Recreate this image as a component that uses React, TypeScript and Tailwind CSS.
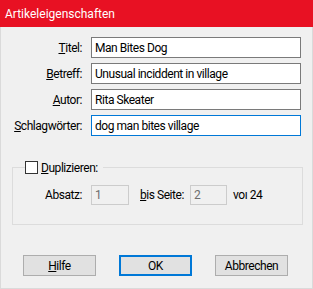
import React from "react";

export default function App() {
    const fields = [
        { key: "T", rest: "itel:", value: "Man Bites Dog" },
        { key: "B", rest: "etreff:", value: "Unusual inciddent in village" },
        { key: "A", rest: "utor:", value: "Rita Skeater" },
        { key: "S", rest: "chlagwörter:", value: "dog man bites village", focused: true },
    ];

    return (
        <div className="w-[313px] h-[289px] flex flex-col font-['Roboto',sans-serif] text-[12px] tracking-[-0.45px] text-black">
            {/* Title bar */}
            <div className="h-[27px] shrink-0 bg-[#e81123] text-white tracking-normal pl-[5px] flex items-center">
                Artikeleigenschaften
            </div>

            {/* Dialog body */}
            <div className="flex-1 bg-[#f0f0f0] border-x border-b border-[#dadada] flex flex-col">
                {/* Field rows */}
                <div className="grid grid-cols-[81px_210px] gap-x-[9px] gap-y-[5px] pt-[10px]">
                    {fields.map((f) => (
                        <React.Fragment key={f.key}>
                            <label className="text-right self-center whitespace-nowrap">
                                <span className="underline">{f.key}</span>
                                {f.rest}
                            </label>
                            <input
                                readOnly
                                value={f.value}
                                className={
                                    f.focused
                                        ? "h-[21px] border border-[#0078d7] bg-white px-[3px] outline-none"
                                        : "h-[21px] border border-[#7a7a7a] bg-white px-[3px] outline-none"
                                }
                            />
                        </React.Fragment>
                    ))}
                </div>

                {/* Duplicate group */}
                <fieldset className="mt-[24px] ml-[11px] mr-[9px] border border-[#dcdcdc] pt-[10px] pb-[19px]">
                    <legend className="ml-[12px] pr-[5px] flex items-center gap-[3px] h-[15px]">
                        <span className="w-[13px] h-[13px] border border-[#333333] bg-white" />
                        <span>
                            <span className="underline">D</span>uplizieren:
                        </span>
                    </legend>
                    <div className="flex items-center">
                        <span className="w-[69px] text-right">Absatz:</span>
                        <input
                            readOnly
                            disabled
                            value="1"
                            className="ml-[9px] w-[38px] h-[20px] border border-[#cccccc] bg-[#f0f0f0] text-[#6d6d6d] px-[3px]"
                        />
                        <span className="ml-[11px] w-[42px] whitespace-nowrap">
                            <span className="underline">b</span>is Seite:
                        </span>
                        <input
                            readOnly
                            disabled
                            value="2"
                            className="ml-[8px] w-[37px] h-[20px] border border-[#cccccc] bg-[#f0f0f0] text-[#6d6d6d] px-[3px]"
                        />
                        <span className="ml-[6px] whitespace-nowrap">voı 24</span>
                    </div>
                </fieldset>

                {/* Buttons */}
                <div className="mt-[30px] ml-[22px] flex gap-[23px]">
                    <button className="w-[73px] h-[21px] border border-[#adadad] bg-[#e1e1e1]">
                        <span className="underline">H</span>ilfe
                    </button>
                    <button className="w-[73px] h-[21px] border-2 border-[#0078d7] bg-[#e1e1e1]">
                        OK
                    </button>
                    <button className="w-[73px] h-[21px] border border-[#adadad] bg-[#e1e1e1]">
                        Abbrechen
                    </button>
                </div>
            </div>
        </div>
    );
}
